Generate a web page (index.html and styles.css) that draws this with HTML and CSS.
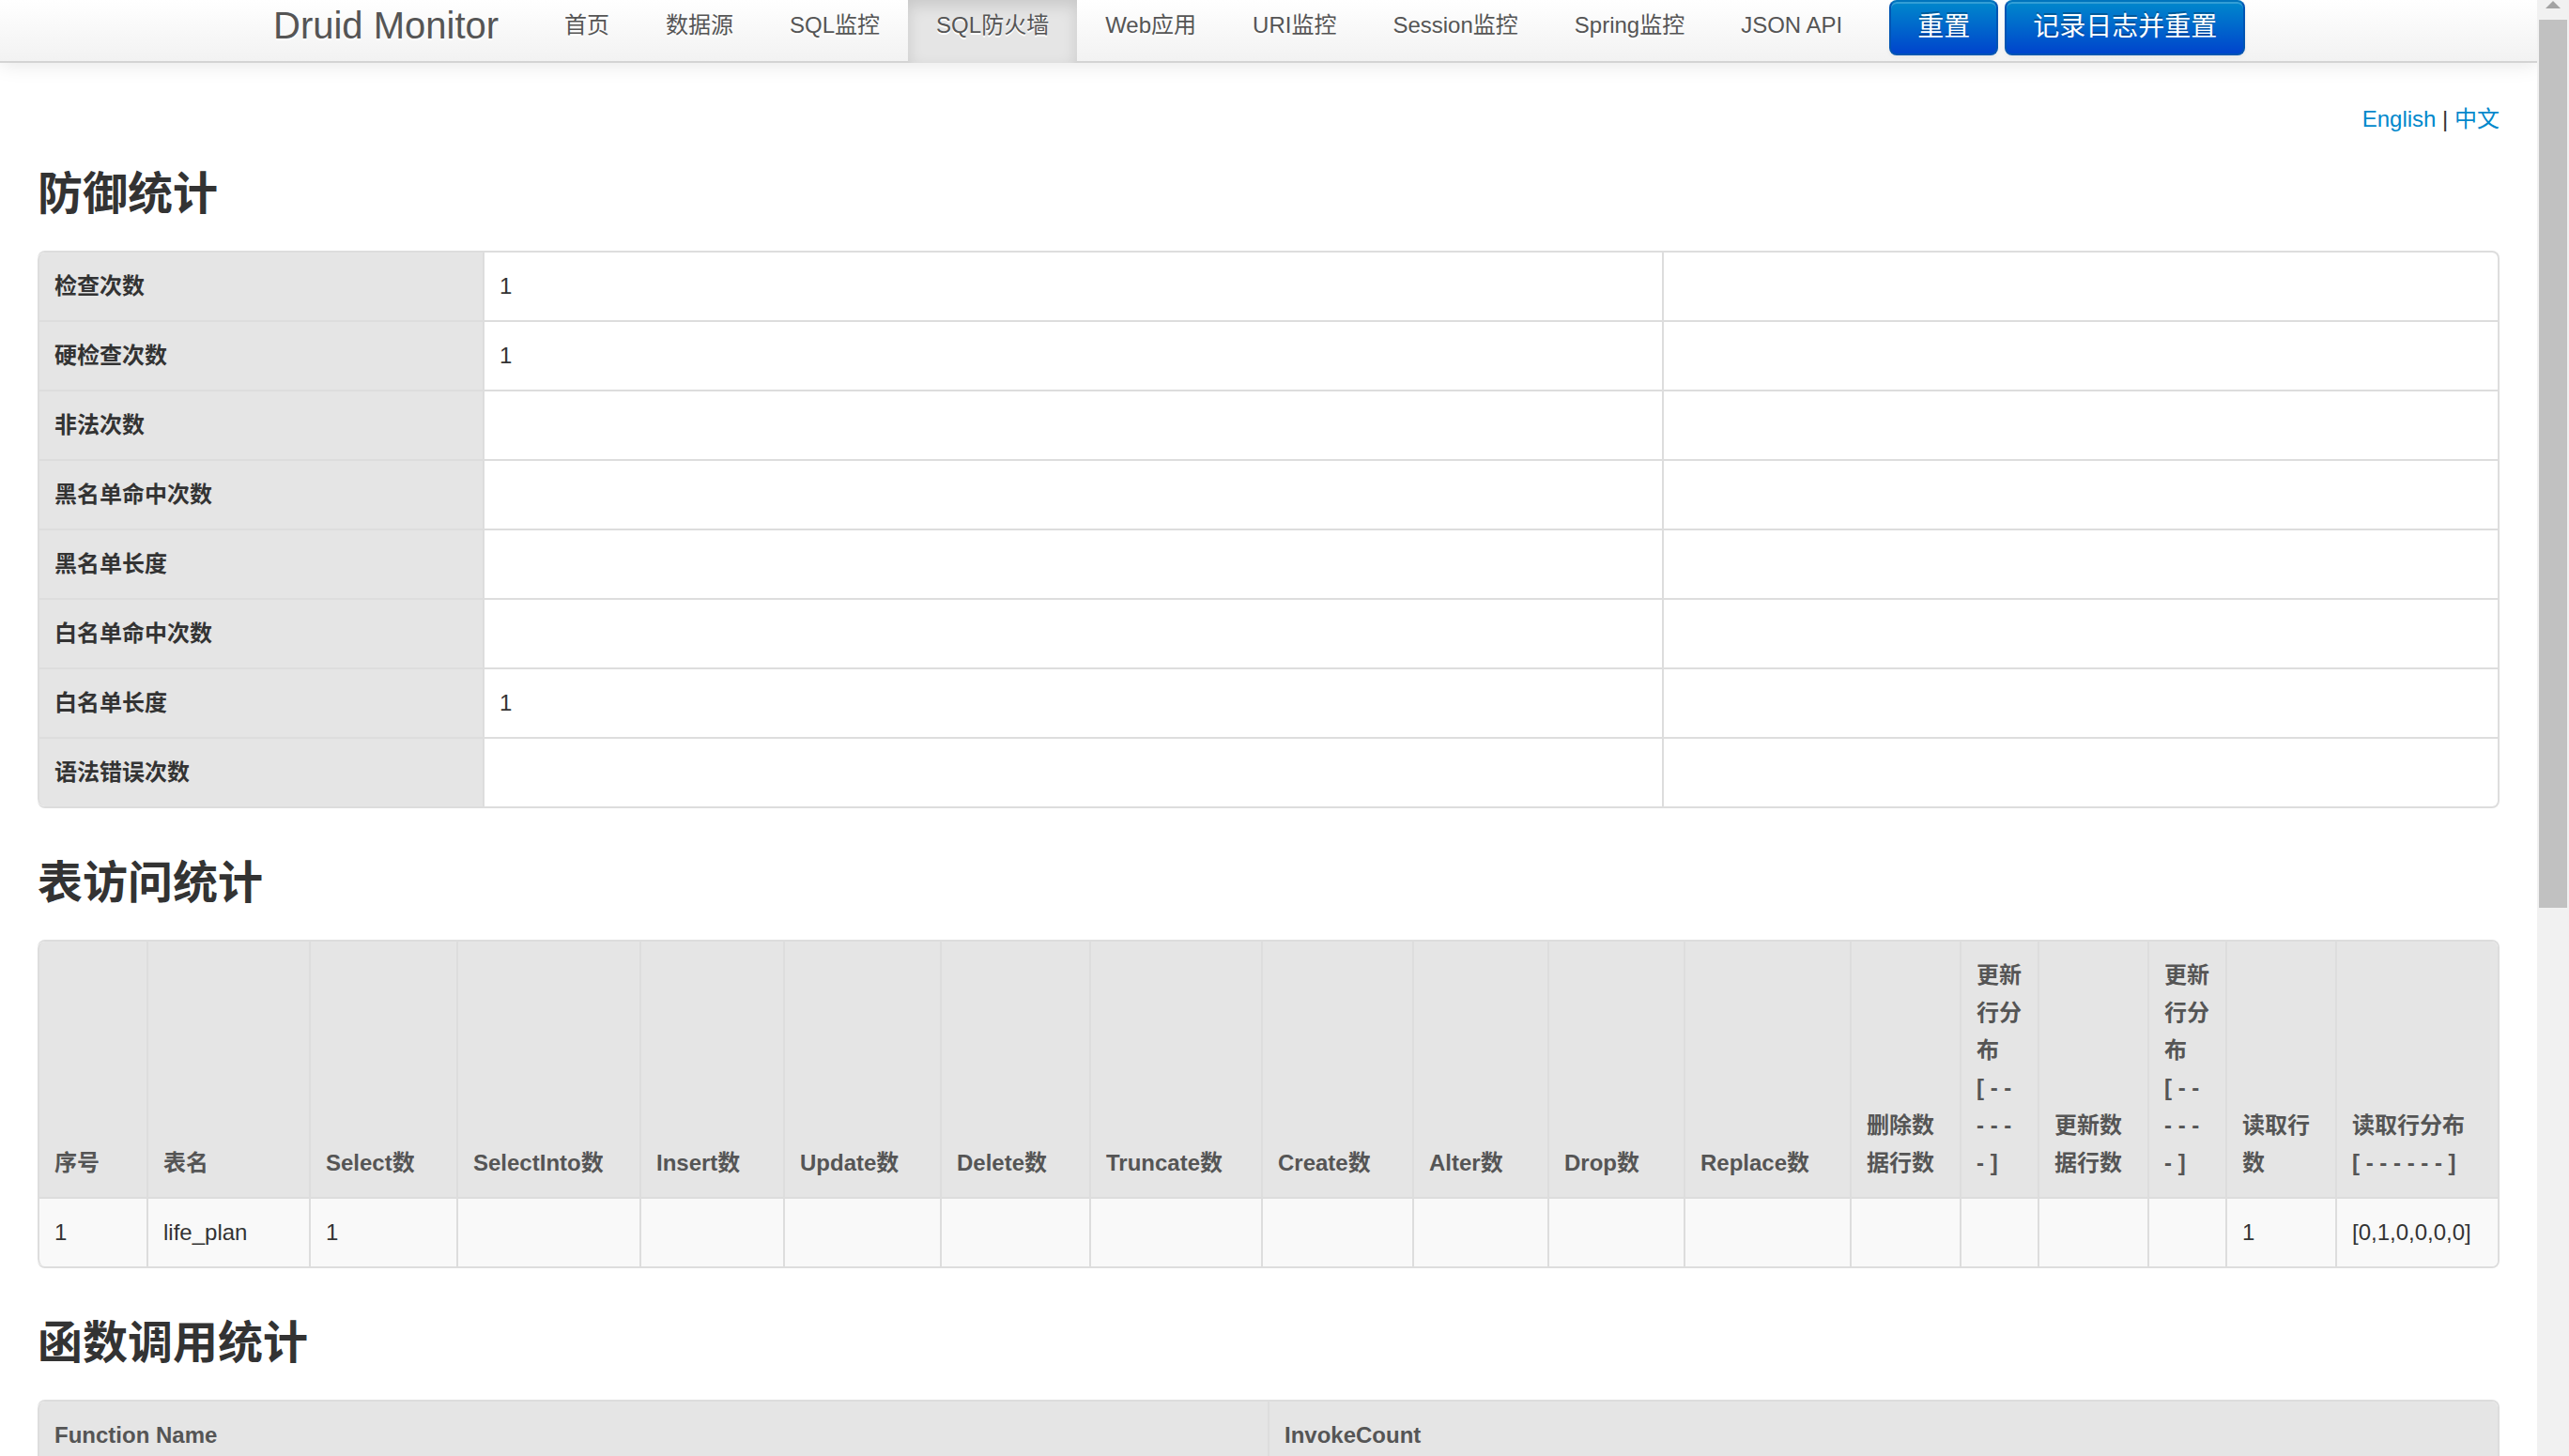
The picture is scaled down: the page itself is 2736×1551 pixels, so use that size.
FILE: index.html
```html
<!DOCTYPE html>
<html lang="zh-CN">
<head>
<meta charset="utf-8">
<title>Druid Monitor</title>
<link rel="stylesheet" href="styles.css">
</head>
<body>
<div class="page">
  <header class="navbar">
    <div class="navbar-inner">
      <a class="brand" href="#">Druid Monitor</a>
      <nav class="nav">
        <a href="#">首页</a>
        <a href="#">数据源</a>
        <a href="#">SQL监控</a>
        <a href="#" class="active">SQL防火墙</a>
        <a href="#">Web应用</a>
        <a href="#">URI监控</a>
        <a href="#">Session监控</a>
        <a href="#">Spring监控</a>
        <a href="#">JSON API</a>
      </nav>
      <div class="actions">
        <button class="btn" type="button">重置</button>
        <button class="btn" type="button">记录日志并重置</button>
      </div>
    </div>
  </header>
  <main class="content">
    <div class="lang"><a href="#">English</a> | <a href="#">中文</a></div>

    <h3>防御统计</h3>
    <table class="table">
      <colgroup><col class="w-label"><col class="w-value"><col class="w-note"></colgroup>
      <tbody>
        <tr><th scope="row">检查次数</th><td>1</td><td></td></tr>
        <tr><th scope="row">硬检查次数</th><td>1</td><td></td></tr>
        <tr><th scope="row">非法次数</th><td></td><td></td></tr>
        <tr><th scope="row">黑名单命中次数</th><td></td><td></td></tr>
        <tr><th scope="row">黑名单长度</th><td></td><td></td></tr>
        <tr><th scope="row">白名单命中次数</th><td></td><td></td></tr>
        <tr><th scope="row">白名单长度</th><td>1</td><td></td></tr>
        <tr><th scope="row">语法错误次数</th><td></td><td></td></tr>
      </tbody>
    </table>

    <h3>表访问统计</h3>
    <table class="table striped">
      <colgroup>
        <col class="w-index"><col class="w-name"><col class="w-select"><col class="w-into"><col class="w-insert"><col class="w-update"><col class="w-delete"><col class="w-truncate"><col class="w-create"><col class="w-alter"><col class="w-drop"><col class="w-replace"><col class="w-rows"><col class="w-dist"><col class="w-rows"><col class="w-dist"><col class="w-rows"><col class="w-fetch">
      </colgroup>
      <thead>
        <tr>
          <th>序号</th><th>表名</th><th>Select数</th><th>SelectInto数</th><th>Insert数</th><th>Update数</th><th>Delete数</th><th>Truncate数</th><th>Create数</th><th>Alter数</th><th>Drop数</th><th>Replace数</th><th>删除数据行数</th><th>更新行分布<br>[ - - - - - - ]</th><th>更新数据行数</th><th>更新行分布<br>[ - - - - - - ]</th><th>读取行数</th><th>读取行分布<br>[ - - - - - - ]</th>
        </tr>
      </thead>
      <tbody>
        <tr>
          <td>1</td><td>life_plan</td><td>1</td><td></td><td></td><td></td><td></td><td></td><td></td><td></td><td></td><td></td><td></td><td></td><td></td><td></td><td>1</td><td>[0,1,0,0,0,0]</td>
        </tr>
      </tbody>
    </table>

    <h3>函数调用统计</h3>
    <table class="table striped">
      <thead><tr><th>Function Name</th><th>InvokeCount</th></tr></thead>
      <tbody><tr><td></td><td></td></tr></tbody>
    </table>
  </main>
</div>
<div class="scrollbar" aria-hidden="true">
  <svg class="scroll-up" viewBox="0 0 16 8"><path d="M8 0L16 8H0Z" fill="#a3a3a3"/></svg>
  <div class="thumb"></div>
</div>
</body>
</html>
```
FILE: styles.css
```css
* { box-sizing: border-box; }
body {
  margin: 0;
  display: flex;
  height: 100vh;
  overflow: hidden;
  background: #fff;
  color: #333;
  font: 24px/40px "Liberation Sans", "Noto Sans CJK SC", sans-serif;
}
a { color: #08c; text-decoration: none; }
.page { flex: 1; min-width: 0; overflow: hidden; }

.navbar {
  background: linear-gradient(#fff, #f2f2f2);
  border-bottom: 2px solid #d4d4d4;
  box-shadow: 0 2px 20px rgba(0, 0, 0, .1);
}
.navbar-inner {
  display: flex;
  align-items: flex-start;
  max-width: 2200px;
  margin: 0 auto;
  white-space: nowrap;
}
.brand {
  padding: 7px 40px 0;
  font-size: 40px;
  color: #555;
  text-shadow: 0 2px 0 #fff;
}
.nav { display: flex; margin-bottom: -2px; }
.nav a {
  padding: 7px 30px 20px;
  color: #555;
  text-shadow: 0 2px 0 #fff;
}
.nav .active {
  background: #e5e5e5;
  box-shadow: inset 0 6px 16px rgba(0, 0, 0, .125);
}
.actions { display: flex; gap: 7px; margin-left: 20px; }
.btn {
  padding: 7px 28px 8px;
  border: 2px solid #0055b3;
  border-top-color: #0074bd;
  border-radius: 8px;
  background: linear-gradient(#08c, #04c);
  box-shadow: inset 0 2px 0 rgba(255, 255, 255, .2), 0 2px 4px rgba(0, 0, 0, .05);
  color: #fff;
  font: inherit;
  font-size: 28px;
  text-shadow: 0 -2px 0 rgba(0, 0, 0, .25);
}

.content { padding: 40px 40px 0; }
.lang { text-align: right; }
h3 { margin: 20px 0; font-size: 48px; line-height: 80px; }

.table {
  width: 100%;
  margin-bottom: 40px;
  table-layout: fixed;
  border: 2px solid #ddd;
  border-left: 0;
  border-collapse: separate;
  border-spacing: 0;
  border-radius: 8px;
  overflow: hidden;
}
.table + h3 { margin-top: 0; }
.table th, .table td {
  height: 74px;
  padding: 16px;
  border-left: 2px solid #ddd;
  border-top: 2px solid #ddd;
  text-align: left;
  vertical-align: top;
}
.table thead th,
.table colgroup + tbody tr:first-child > * { border-top: 0; height: 72px; }
.table th { background: #e5e5e5; }
.table thead th { color: #555; vertical-align: bottom; }
.table thead th:first-child,
.table colgroup + tbody tr:first-child > :first-child { border-top-left-radius: 8px; }
.table tbody tr:last-child > :first-child { border-bottom-left-radius: 8px; }
.striped td { background: #f9f9f9; }

.w-label { width: 474px; }
.w-value { width: 1256px; }
.w-note { width: 890px; }
.w-index { width: 116px; }
.w-name { width: 173px; }
.w-select { width: 157px; }
.w-into { width: 195px; }
.w-insert { width: 153px; }
.w-update { width: 167px; }
.w-delete { width: 159px; }
.w-truncate { width: 183px; }
.w-create { width: 161px; }
.w-alter { width: 144px; }
.w-drop { width: 145px; }
.w-replace { width: 177px; }
.w-rows { width: 117px; }
.w-dist { width: 83px; }
.w-fetch { width: 173px; }

.scrollbar {
  width: 34px;
  padding: 1px 2px 0;
  background: #f1f1f1;
}
.scroll-up { display: block; width: 16px; height: 8px; margin: 0 auto 12px; }
.thumb { height: 61%; background: #c1c1c1; }
```
